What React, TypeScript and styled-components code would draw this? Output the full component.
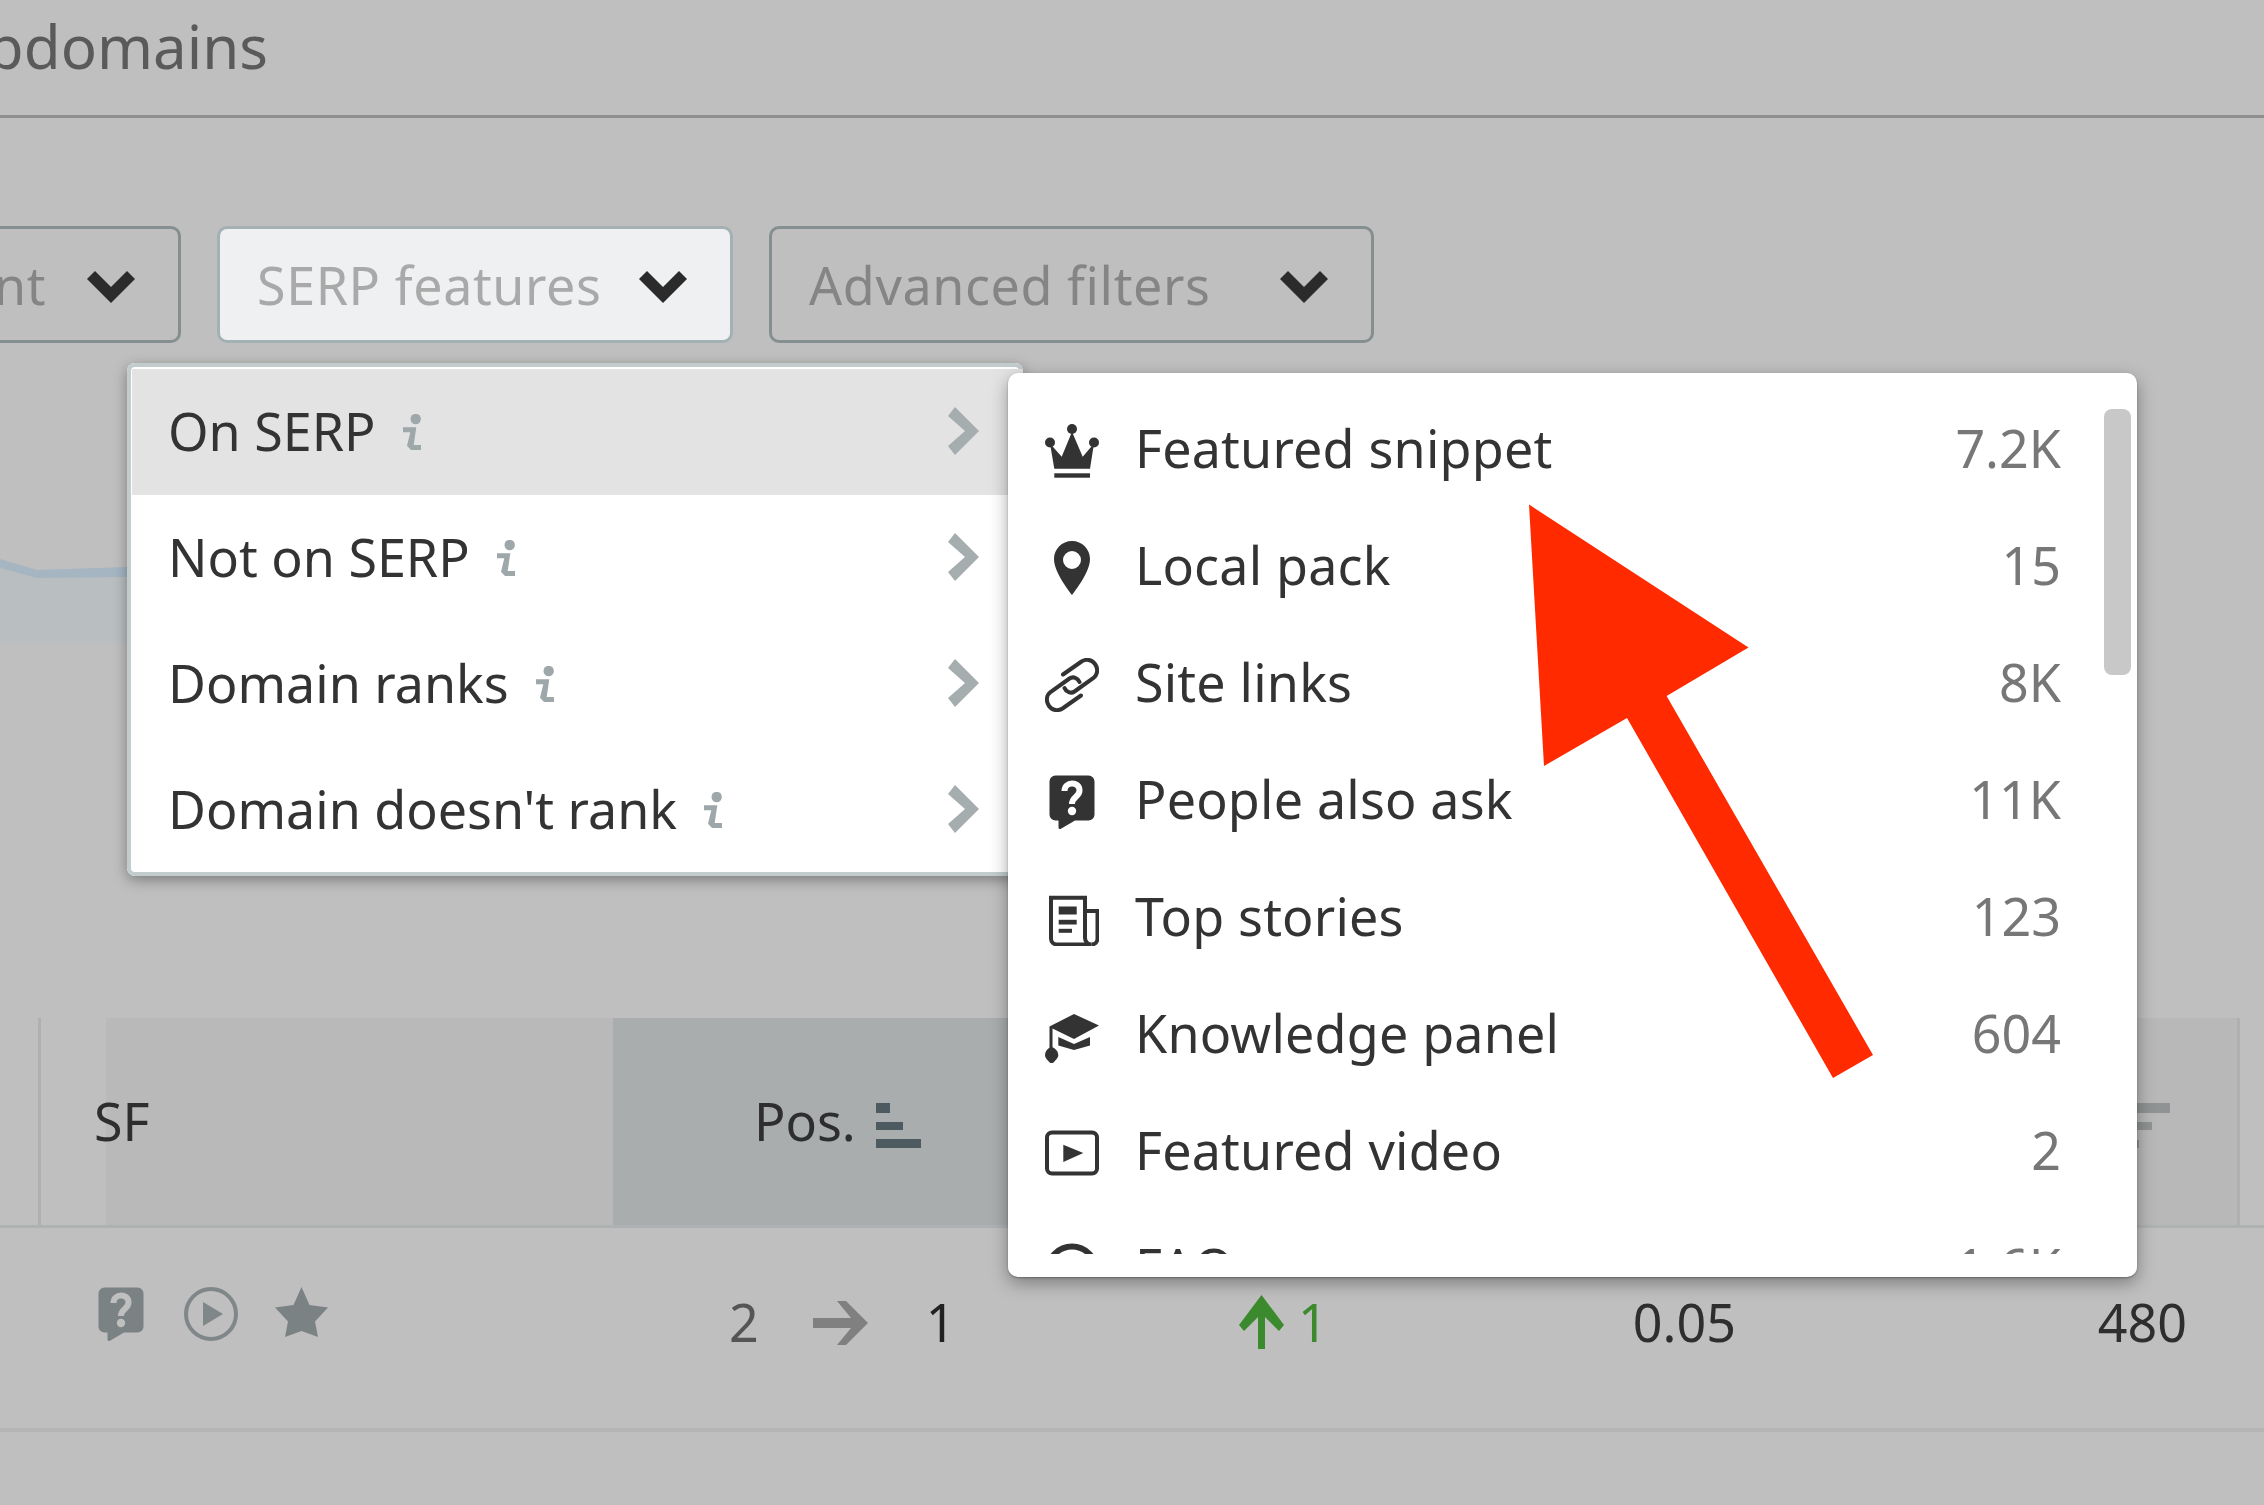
import styled, { createGlobalStyle } from 'styled-components';

const GlobalStyle = createGlobalStyle`
  html, body {
    margin: 0;
    padding: 0;
    background: #bfbfbf;
  }
  * {
    box-sizing: border-box;
  }
`;

const FONT = `"Noto Sans", "Open Sans", sans-serif`;

const CrownIcon = () => (
  <svg width="54" height="54" viewBox="0 0 54 54" fill="#333">
    <circle cx="27" cy="5" r="5" />
    <circle cx="5" cy="18.5" r="5" />
    <circle cx="49" cy="18.5" r="5" />
    <path d="M5 19.5 L16.7 32.7 L27 7.7 L37.7 32.7 L49 19.5 L45 44.7 H9.3 Z" />
    <rect x="9.3" y="49.3" width="35.7" height="4.4" />
  </svg>
);

const PinIcon = () => (
  <svg width="54" height="54" viewBox="0 0 54 54" fill="#333">
    <path
      fillRule="evenodd"
      d="M27 0 C37 0 45 8 45 18 C45 30 33 46 27 54 C21 46 9 30 9 18 C9 8 17 0 27 0 Z M27 10 A9 9 0 1 0 27 28 A9 9 0 1 0 27 10 Z"
    />
  </svg>
);

const LinkIcon = () => (
  <svg width="54" height="54" viewBox="0 0 54 54" fill="none" stroke="#333" strokeWidth="4" strokeLinecap="round">
    <path d="M18 16.5 L36.5 3.5 C40.5 1 46.5 1 50 6 C53.5 11 52.5 17 48.5 20 L29.5 33.5 C26 36 21 34 19.5 30" />
    <path d="M36 37.5 L17.5 50.5 C13.5 53 7.5 53 4 48 C0.5 43 1.5 37 5.5 34 L24.5 20.5 C28 18 33 20 34.5 24" />
  </svg>
);

const QuestionIcon = ({ color = '#333', bg = '#fff' }: { color?: string; bg?: string }) => (
  <svg width="54" height="54" viewBox="0 0 54 54">
    <path
      fill={color}
      d="M10.5 0.5 H43.5 A6 6 0 0 1 49.5 6.5 V39.5 A6 6 0 0 1 43.5 45.5 H30 L15.5 54 C14 54.5 13.5 53 13.5 52 V45.5 H10.5 A6 6 0 0 1 4.5 39.5 V6.5 A6 6 0 0 1 10.5 0.5 Z"
    />
    <path d="M19.5 16 C19.5 6 34.5 6 34.5 15.5 C34.5 22 27 21.5 27 29" fill="none" stroke={bg} strokeWidth="6" />
    <circle cx="27" cy="36" r="4.2" fill={bg} />
  </svg>
);

const NewsIcon = () => (
  <svg width="54" height="54" viewBox="0 0 54 54" fill="none" stroke="#333" strokeWidth="4">
    <path d="M6 5.8 H40 V46 A6.5 6.5 0 0 0 46.5 52.5 H12 A6 6 0 0 1 6 46.5 Z" />
    <path d="M40 19 H52.5 V46.5 A6 6 0 0 1 46.5 52.5" />
    <rect x="13.7" y="14.5" width="18" height="8" fill="#333" stroke="none" />
    <rect x="13.7" y="27.8" width="18" height="4.7" fill="#333" stroke="none" />
    <rect x="13.7" y="36.8" width="13.3" height="4" fill="#333" stroke="none" />
  </svg>
);

const CapIcon = () => (
  <svg width="54" height="54" viewBox="0 0 54 54" fill="#333">
    <path d="M29 5 L54 16.5 L29 30 L7.5 19.5 V40 H4.5 V17.5 Z" />
    <path d="M13.3 28 L29 35 L45 28 V36.5 L29 41 L13.3 36.5 Z" />
    <path d="M6.5 38 C10 39 13.3 42 13.3 46.5 C13.3 49 9 53 6.7 55 C4 53 0 49 0 46.5 C0 42 3 39 6.5 38 Z" />
  </svg>
);

const VideoIcon = () => (
  <svg width="54" height="54" viewBox="0 0 54 54">
    <rect x="2" y="6.5" width="50" height="41" rx="5" fill="none" stroke="#333" strokeWidth="4" />
    <path d="M18.3 18.8 L38.3 27 L18.3 36 Z" fill="#333" />
  </svg>
);

const FaqIcon = () => (
  <svg width="54" height="54" viewBox="0 0 54 54" fill="none" stroke="#333" strokeWidth="6">
    <circle cx="27" cy="27.5" r="24" />
  </svg>
);

const PlayCircleIcon = () => (
  <svg width="54" height="54" viewBox="0 0 54 54">
    <circle cx="27" cy="27" r="25" fill="none" stroke="#7f8788" strokeWidth="4" />
    <path d="M19 15 L39 27 L19 39 Z" fill="#7f8788" />
  </svg>
);

const StarIcon = () => (
  <svg width="55" height="54" viewBox="0 0 55 54">
    <path
      fill="#7b8283"
      d="M27.5 0 L35.5 18 L54 20.5 L41 34.5 L44 50 L27.5 44 L11 50 L14 34.5 L1 20.5 L19.5 18 Z"
    />
  </svg>
);

const ChevronDown = () => (
  <DownSvg width="48" height="32" viewBox="0 0 48 32" fill="#2b2b2b">
    <path d="M0 8 L8 0 L24 16 L40 0 L48 8 L24 32 Z" />
  </DownSvg>
);

const ChevronRight = () => (
  <svg width="31" height="48" viewBox="0 0 31 48" fill="#a5adaf">
    <path d="M0 9 L7 0 L31 24 L7 48 L0 39 L17 24 Z" />
  </svg>
);

const InfoIcon = () => (
  <svg width="18" height="36" viewBox="0 0 18 36" fill="#9ea7a9">
    <circle cx="12.7" cy="5" r="5.2" />
    <path d="M0 13.3 H13.3 L10.7 31 H18 V36 H8 L4 31.7 L7.3 18.3 H0 Z" />
  </svg>
);

const SortBars = ({ color, flip }: { color: string; flip?: boolean }) => (
  <SortSvg width="45" height="45" viewBox="0 0 45 45" fill={color}>
    {flip ? (
      <>
        <rect x="0" y="0" width="38" height="10" />
        <rect x="0" y="19" width="20" height="8" />
        <rect x="0" y="37" width="7" height="8" />
      </>
    ) : (
      <>
        <rect x="0" y="0" width="14" height="10" />
        <rect x="0" y="19" width="27" height="8" />
        <rect x="0" y="36" width="45" height="9" />
      </>
    )}
  </SortSvg>
);

const Page = styled.div`
  position: relative;
  width: 2264px;
  height: 1505px;
  overflow: hidden;
  background: #bfbfbf;
  font-family: ${FONT};
  font-size: 52px;
  color: #2e2e2e;
`;

const TitleBar = styled.div`
  height: 118px;
  border-bottom: 3px solid #8f8f8f;
  overflow: hidden;
`;

const Title = styled.div`
  width: 268px;
  height: 100%;
  display: flex;
  justify-content: flex-end;
  white-space: nowrap;
  font-size: 60px;
  line-height: 93px;
  color: #5a5a5a;
`;

const FilterBar = styled.div`
  display: flex;
  gap: 36px;
  margin-top: 108px;
  margin-left: -284px;
`;

const FilterButton = styled.div<{ $open?: boolean; $width: number }>`
  width: ${(p) => p.$width}px;
  height: 117px;
  padding: 0 43px 0 37px;
  display: flex;
  align-items: center;
  justify-content: space-between;
  border: 3px solid ${(p) => (p.$open ? '#a3b1b5' : '#858f90')};
  border-radius: 10px;
  background: ${(p) => (p.$open ? '#eef0f2' : 'transparent')};
  color: ${(p) => (p.$open ? '#a9a9a9' : '#858585')};
  letter-spacing: 0.6px;
  white-space: nowrap;
`;

const DownSvg = styled.svg`
  flex: none;
  margin-top: 5px;
`;

const ChartArea = styled.div`
  height: 675px;
  padding-top: 216px;
`;

const ChartFragment = styled.svg`
  display: block;
`;

const TableHeader = styled.div`
  height: 210px;
  display: flex;
  border-bottom: 3px solid #aeb2b2;
`;

const HeaderCell = styled.div<{ $width: number; $sorted?: boolean; $divider?: boolean; $right?: boolean }>`
  width: ${(p) => p.$width}px;
  padding-bottom: 3px;
  display: flex;
  align-items: center;
  justify-content: ${(p) => (p.$right ? 'flex-end' : 'flex-start')};
  gap: 20px;
  background: ${(p) => (p.$sorted ? '#a9adad' : 'transparent')};
  border-right: ${(p) => (p.$divider ? '3px solid #b0b0b0' : 'none')};
`;

const SortSvg = styled.svg`
  margin-top: 11px;
`;

const SfCell = styled(HeaderCell)`
  padding-left: 53px;
  background: linear-gradient(to right, #bfbfbf 65px, #b9b9b9 65px);
`;

const PosCell = styled(HeaderCell)`
  padding-left: 141px;
`;

const TrafficCell = styled(HeaderCell)`
  padding-right: 60px;
  background: #b8b8b8;
`;

const DataRow = styled.div`
  height: 204px;
  display: flex;
  border-bottom: 4px solid #b5b5b5;
`;

const SerpIcons = styled.div`
  width: 613px;
  padding: 59px 0 0 94px;
  display: flex;
  align-items: flex-start;
  gap: 36px;
`;

const PositionFlow = styled.div`
  width: 626px;
  padding: 59px 0 0 116px;
  display: flex;
  align-items: flex-start;
`;

const OldPos = styled.span`
  color: #555;
  line-height: 70px;
`;

const NewPos = styled.span`
  color: #222;
  line-height: 70px;
`;

const FlowArrow = styled.svg`
  margin: 14px 58px 0 54px;
`;

const Change = styled.div`
  width: 361px;
  padding-top: 59px;
  display: flex;
  align-items: flex-start;
  gap: 14px;
  line-height: 70px;
  color: #3c8a2e;
`;

const ChangeArrow = styled.svg`
  margin-top: 8px;
`;

const ValueCell = styled.div<{ $width: number }>`
  width: ${(p) => p.$width}px;
  padding-top: 59px;
  text-align: right;
  line-height: 70px;
`;

const Popover = styled.div`
  position: absolute;
  left: 127px;
  top: 363px;
  display: flex;
  align-items: flex-start;
`;

const Menu = styled.div`
  width: 896px;
  height: 513px;
  padding: 6px 0 0 5px;
  overflow: hidden;
  flex: none;
  border-radius: 8px;
  background: #fff;
  box-shadow: inset 0 0 0 4px #c2cccc, 0 4px 14px rgba(0, 0, 0, 0.35);
`;

const MenuRow = styled.div<{ $active?: boolean }>`
  height: 126px;
  padding: 0 41px 0 36px;
  display: flex;
  align-items: center;
  background: ${(p) => (p.$active ? '#e3e3e3' : 'transparent')};
  color: #333;
`;

const MenuLabel = styled.span`
  margin: -4px 27px 0 0;
`;

const MenuChevron = styled.span`
  margin: -2px 3px 0 auto;
  display: flex;
`;

const SubMenu = styled.div`
  position: relative;
  width: 1129px;
  height: 904px;
  margin: 10px 0 0 -15px;
  padding: 19px 76px 23px 37px;
  flex: none;
  border-radius: 10px;
  background: #fff;
  box-shadow: 0 1px 2px rgba(0, 0, 0, 0.3), 0 6px 18px rgba(0, 0, 0, 0.35);
`;

const SubList = styled.div`
  height: 862px;
  overflow: hidden;
`;

const SubRow = styled.div`
  height: 117px;
  display: flex;
  align-items: center;
  gap: 36px;
  color: #333;
  svg {
    flex: none;
  }
`;

const SubLabel = styled.span`
  margin-top: -6px;
  letter-spacing: 0.2px;
`;

const SubCount = styled.span`
  margin: -6px 0 0 auto;
  color: #777;
`;

const Scrollbar = styled.div`
  position: absolute;
  top: 36px;
  right: 6px;
  width: 27px;
  height: 266px;
  border-radius: 8px;
  background: #c8c8c8;
`;

const RedArrow = styled.svg`
  position: absolute;
  left: 0;
  top: 0;
  pointer-events: none;
`;

const features = [
  { icon: <CrownIcon />, label: 'Featured snippet', count: '7.2K' },
  { icon: <PinIcon />, label: 'Local pack', count: '15' },
  { icon: <LinkIcon />, label: 'Site links', count: '8K' },
  { icon: <QuestionIcon />, label: 'People also ask', count: '11K' },
  { icon: <NewsIcon />, label: 'Top stories', count: '123' },
  { icon: <CapIcon />, label: 'Knowledge panel', count: '604' },
  { icon: <VideoIcon />, label: 'Featured video', count: '2' },
  { icon: <FaqIcon />, label: 'FAQ', count: '1.6K' },
];

const menuItems = ['On SERP', 'Not on SERP', 'Domain ranks', "Domain doesn't rank"];

export default function App() {
  return (
    <Page>
      <GlobalStyle />
      <TitleBar>
        <Title>Subdomains</Title>
      </TitleBar>
      <FilterBar>
        <FilterButton $width={465}>
          Word count
          <ChevronDown />
        </FilterButton>
        <FilterButton $open $width={516}>
          SERP features
          <ChevronDown />
        </FilterButton>
        <FilterButton $width={605}>
          Advanced filters
          <ChevronDown />
        </FilterButton>
      </FilterBar>
      <ChartArea>
        <ChartFragment width="127" height="84" viewBox="0 0 127 84">
          <path d="M0 9 L37 19 L127 18 V84 H0 Z" fill="#b9bec1" />
          <path d="M0 0 L37 11 L127 8 V18 L37 19 L0 9 Z" fill="#a5b5c2" />
        </ChartFragment>
      </ChartArea>
      <TableHeader>
        <HeaderCell $width={41} $divider />
        <SfCell $width={572}>SF</SfCell>
        <PosCell $width={487} $sorted>
          Pos.
          <SortBars color="#4d5b60" />
        </PosCell>
        <TrafficCell $width={1140} $divider $right>
          <SortBars color="#8f9393" flip />
        </TrafficCell>
      </TableHeader>
      <DataRow>
        <SerpIcons>
          <QuestionIcon color="#7b8283" bg="#bfbfbf" />
          <PlayCircleIcon />
          <StarIcon />
        </SerpIcons>
        <PositionFlow>
          <OldPos>2</OldPos>
          <FlowArrow width="55" height="44" viewBox="0 0 55 44" fill="#808080">
            <path d="M0 17 H38 L24 0 H33 L55 22 L33 44 H24 L38 27 H0 Z" />
          </FlowArrow>
          <NewPos>1</NewPos>
        </PositionFlow>
        <Change>
          <ChangeArrow width="45" height="54" viewBox="0 0 45 54" fill="#3c8a2e">
            <path d="M22.5 0 L45 30 L40 36 L26 22 V54 H19 V22 L5 36 L0 30 Z" />
          </ChangeArrow>
          1
        </Change>
        <ValueCell $width={136}>0.05</ValueCell>
        <ValueCell $width={451}>480</ValueCell>
      </DataRow>
      <Popover>
        <Menu>
          {menuItems.map((item, i) => (
            <MenuRow key={item} $active={i === 0}>
              <MenuLabel>{item}</MenuLabel>
              <InfoIcon />
              <MenuChevron>
                <ChevronRight />
              </MenuChevron>
            </MenuRow>
          ))}
        </Menu>
        <SubMenu>
          <SubList>
            {features.map((f) => (
              <SubRow key={f.label}>
                {f.icon}
                <SubLabel>{f.label}</SubLabel>
                <SubCount>{f.count}</SubCount>
              </SubRow>
            ))}
          </SubList>
          <Scrollbar />
        </SubMenu>
      </Popover>
      <RedArrow width="2264" height="1505" viewBox="0 0 2264 1505">
        <path fill="#ff2a00" d="M1529 504.6 L1748.5 647.4 L1666.6 696 L1873 1055 L1833 1078 L1627 718 L1544 766 Z" />
      </RedArrow>
    </Page>
  );
}
